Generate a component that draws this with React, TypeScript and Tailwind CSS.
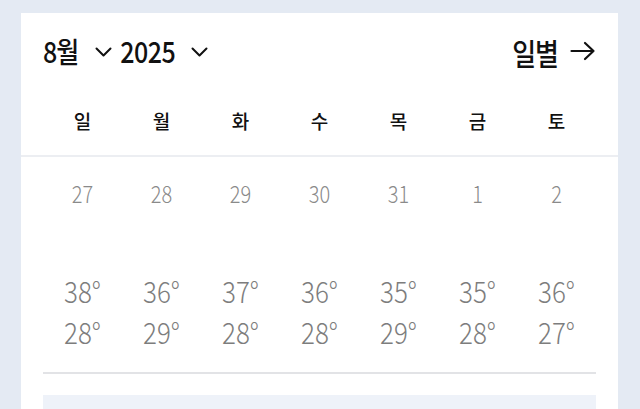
const days = ["일", "월", "화", "수", "목", "금", "토"];
const dates = [27, 28, 29, 30, 31, 1, 2];
const highs = [38, 36, 37, 36, 35, 35, 36];
const lows = [28, 29, 28, 28, 29, 28, 27];

function Chevron() {
  return (
    <svg width="17" height="10" viewBox="0 0 17 10" fill="none" stroke="#111" strokeWidth="2" strokeLinecap="round" strokeLinejoin="round">
      <path d="M1.5 1.5l7 7 7-7" />
    </svg>
  );
}

export default function App() {
  return (
    <div
      className="h-[409px] w-[640px] overflow-hidden bg-[#e4eaf3] pt-[13px] pl-[21px] pr-[22px]"
      style={{ fontFamily: '"Noto Sans CJK KR", "Noto Sans", sans-serif' }}
    >
      <div className="h-[400px] bg-white">
        <div className="flex h-[76px] items-center justify-between px-[22px]">
          <div className="flex items-center text-[#111]">
            <span className="inline-block scale-y-[1.15] text-[25px] font-medium tracking-[-1px]">8월</span>
            <span className="ml-[17px] mr-[8px] mt-[2px]"><Chevron /></span>
            <span className="inline-block scale-y-[1.18] text-[25px] font-medium tracking-[-0.5px]">2025</span>
            <span className="ml-[16px] mt-[2px]"><Chevron /></span>
          </div>
          <div className="flex items-center text-[#111]">
            <span className="inline-block scale-y-[1.15] text-[26px] font-medium tracking-[-1px]">일별</span>
            <svg className="ml-[12px]" width="26" height="20" viewBox="0 0 26 20" fill="none" stroke="#111" strokeWidth="2.2" strokeLinecap="round" strokeLinejoin="round">
              <path d="M1.5 10h22M15 2l8.5 8-8.5 8" />
            </svg>
          </div>
        </div>
        <div className="grid h-[66px] grid-cols-7 items-center px-[22px] pb-[2px]">
          {days.map((d) => (
            <div key={d} className="text-center text-[19px] font-medium text-[#111]">{d}</div>
          ))}
        </div>
        <div className="h-[2px] bg-[#eceef2]" />
        <div className="grid grid-cols-7 px-[22px] pt-[22px]">
          {dates.map((d) => (
            <div key={d} className="scale-y-[1.15] text-center text-[20px] font-light leading-[30px] text-[#8a8a8a]">{d}</div>
          ))}
        </div>
        <div className="grid grid-cols-7 px-[22px] pt-[62px]">
          {highs.map((h, i) => (
            <div key={i} className="flex flex-col items-center text-[26px] font-light text-[#7d7d7d]">
              <div className="h-[41px] scale-y-[1.12] leading-[40px]">{h}°</div>
              <div className="h-[41px] scale-y-[1.12] leading-[40px]">{lows[i]}°</div>
            </div>
          ))}
        </div>
        <div className="mx-[22px] mt-[19px] h-[2px] bg-[#e2e3e6]" />
        <div className="mx-[22px] mt-[21px] h-[40px] bg-[#eef2f9]" />
      </div>
    </div>
  );
}
